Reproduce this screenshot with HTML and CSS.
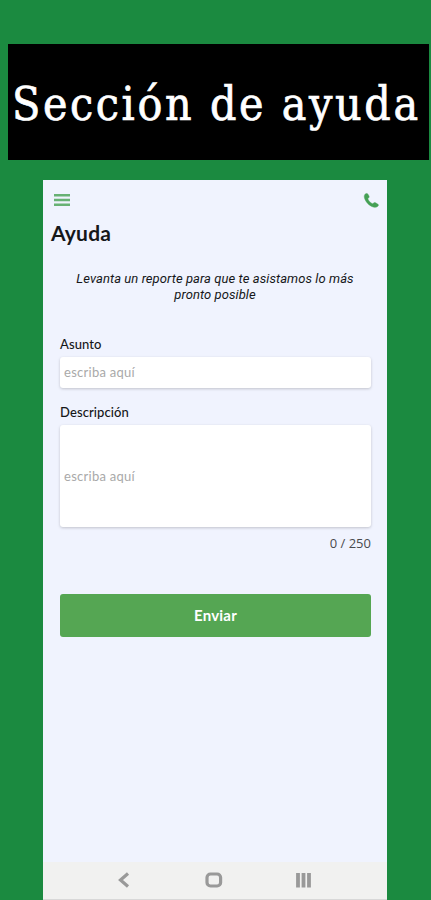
FILE: index.html
```html
<!DOCTYPE html>
<html lang="es">
<head>
<meta charset="utf-8">
<meta name="viewport" content="width=device-width, initial-scale=1">
<title>Sección de ayuda</title>
<link rel="stylesheet" href="styles.css">
</head>
<body>
<h1 class="banner">Sección de ayuda</h1>
<main class="phone">
  <header class="topbar">
    <svg class="menu" viewBox="0 0 16 12" aria-label="Menú"><path d="M0 1.300h16M0 6h16M0 10.700h16" stroke="#68b174" stroke-width="2.600"/></svg>
    <svg class="call" viewBox="0 0 16 16" aria-label="Llamar"><path fill="#45a055" stroke="#45a055" stroke-width=".5" d="M1.200 1.200C2 .3 3.500.2 4.200 1.200l1.100 2.100c.4.800.1 1.500-.5 2l-.8.800c.8 2.300 2.900 4.400 5.300 5.400l1-.8c.6-.5 1.200-.7 1.900-.3l2.400 1.400c1 .7 1 1.700.1 2.400-1.300 1.100-2.900 1.300-4.700.8C5.600 13.700 1.200 9 .4 4.700.2 3.300.3 2.100 1.200 1.200Z"/></svg>
  </header>
  <h2 class="title">Ayuda</h2>
  <p class="intro">Levanta un reporte para que te asistamos lo más<br>pronto posible</p>
  <form class="form">
    <label class="label" for="asunto">Asunto</label>
    <input class="field" id="asunto" placeholder="escriba aquí">
    <label class="label second" for="descripcion">Descripción</label>
    <input class="field large" id="descripcion" placeholder="escriba aquí">
    <div class="count">0 / 250</div>
    <button class="send" type="button">Enviar</button>
  </form>
  <nav class="navbar">
    <svg viewBox="0 0 18 18"><path d="M13 2.500 5.500 9l7.500 6.500" fill="none" stroke="#999" stroke-width="3.200"/></svg>
    <svg viewBox="0 0 18 18"><rect x="2" y="3" width="13.600" height="12" rx="3.500" fill="none" stroke="#999" stroke-width="3.200"/></svg>
    <svg viewBox="0 0 18 18"><path d="M3 2v14.500M8.500 2v14.500M14 2v14.500" stroke="#999" stroke-width="3.800"/></svg>
  </nav>
</main>
</body>
</html>
```
FILE: styles.css
```css
* { box-sizing: border-box; }
body {
  margin: 0;
  height: 900px;
  padding-top: 44px;
  background: #1b8a40;
  font-family: Lato, sans-serif;
  color: #161719;
  overflow: hidden;
}
.banner {
  margin: 0 2px 20px 8px;
  height: 116px;
  padding-left: 4px;
  background: #000;
  color: #fff;
  font: 400 46px/120px "DejaVu Serif Condensed", "DejaVu Serif", serif;
  font-stretch: condensed;
  letter-spacing: 2.6px;
  white-space: nowrap;
  -webkit-text-stroke: 0.7px #fff;
}
.phone {
  display: flex;
  flex-direction: column;
  width: 344px;
  height: 720px;
  margin-left: 43px;
  background: #f0f3fe;
}
.topbar {
  display: flex;
  justify-content: space-between;
  align-items: center;
  height: 40px;
  padding: 0 8px 0 11px;
}
.menu { width: 16px; height: 12px; }
.call { width: 15px; height: 15px; overflow: visible; }
.title {
  margin: 0 0 0 8px;
  font-size: 21px;
  line-height: 26px;
  font-weight: 700;
  letter-spacing: 0.2px;
}
.intro {
  margin: 25px 0 0;
  text-align: center;
  font: italic 400 13px/16px Roboto, sans-serif;
  letter-spacing: 0.07px;
}
.form {
  display: flex;
  flex-direction: column;
  margin: 33px 16px 0 17px;
}
.label { font-size: 13px; line-height: 16px; font-weight: 500; letter-spacing: 0.1px; }
.second { margin-top: 16px; }
.field {
  width: 100%;
  height: 31px;
  margin-top: 5px;
  padding: 0 4px 2px;
  border: 0;
  border-radius: 3px;
  background: #fff;
  box-shadow: 0 1px 3px #0003;
  font: 400 13px Lato, sans-serif;
  letter-spacing: 0.27px;
}
.field::placeholder { color: #a9a9a9; opacity: 1; }
.large { height: 102px; padding-bottom: 0; }
.count {
  margin-top: 8px;
  text-align: right;
  font: 400 13px/16px "Open Sans", sans-serif;
  color: #494a4e;
}
.send {
  height: 43px;
  margin-top: 43px;
  padding-bottom: 3px;
  border: 0;
  border-radius: 3px;
  background: #55a653;
  color: #fff;
  font: 700 15px Lato, sans-serif;
  letter-spacing: 0.2px;
}
.navbar {
  display: flex;
  align-items: center;
  gap: 72px;
  height: 38px;
  margin-top: auto;
  padding: 0 0 2px 72px;
  background: #f1f1f0;
  border-bottom: 1px solid #d8d8d8;
}
.navbar svg { width: 18px; height: 18px; }
```
